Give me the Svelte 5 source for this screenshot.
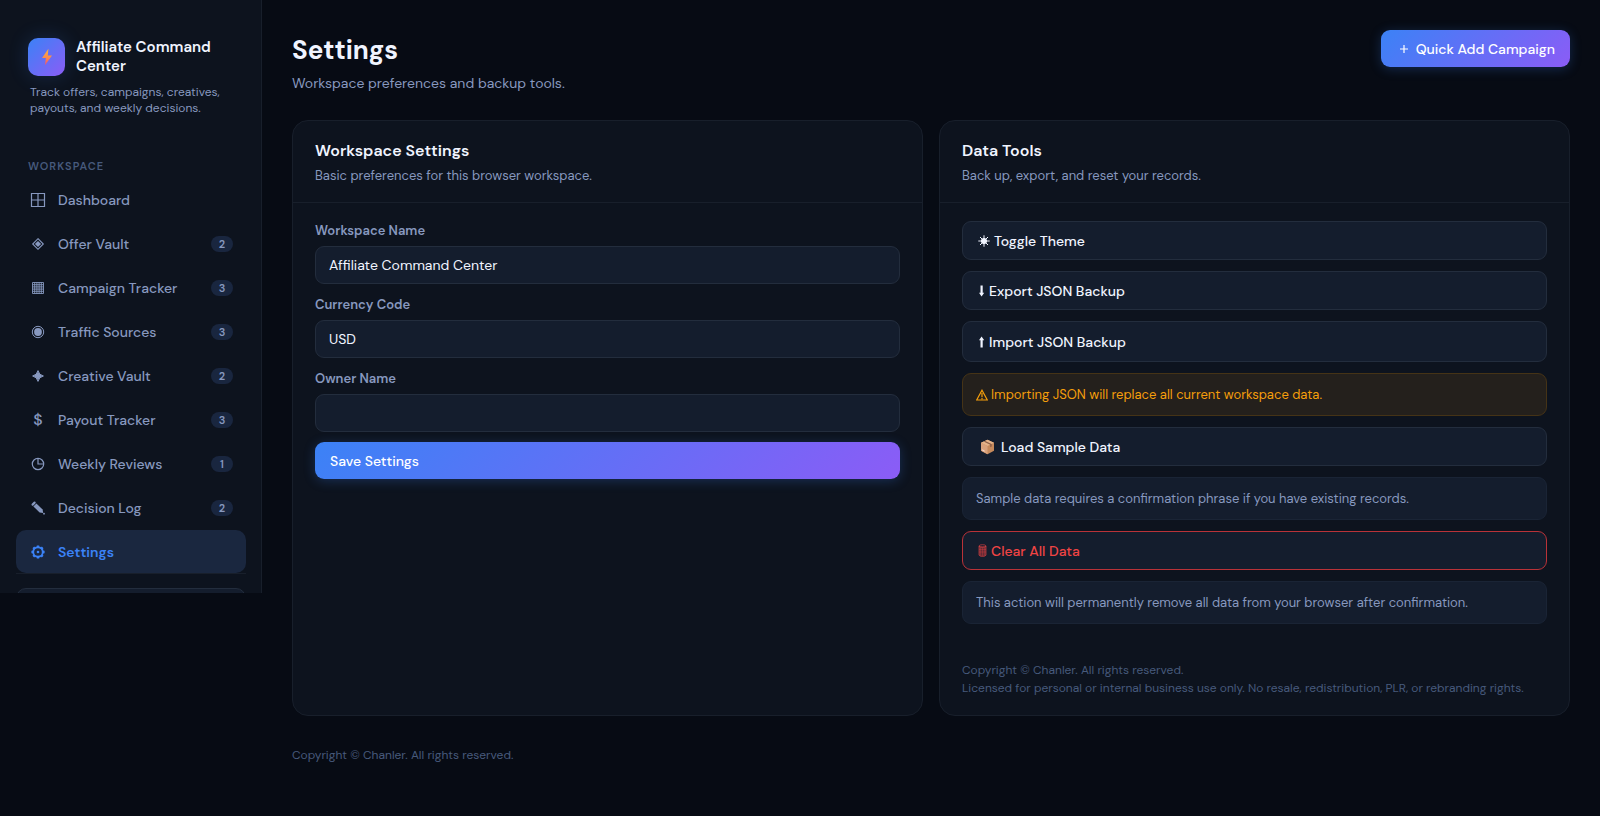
<script lang="ts">
	let workspaceName = $state('Affiliate Command Center');
	let currency = $state('USD');
	let owner = $state('');

	const navItems = [
		{ icon: 'grid', label: 'Dashboard' },
		{ icon: 'diamond', label: 'Offer Vault', count: 2 },
		{ icon: 'table', label: 'Campaign Tracker', count: 3 },
		{ icon: 'target', label: 'Traffic Sources', count: 3 },
		{ icon: 'star', label: 'Creative Vault', count: 2 },
		{ icon: 'dollar', label: 'Payout Tracker', count: 3 },
		{ icon: 'clock', label: 'Weekly Reviews', count: 1 },
		{ icon: 'pencil', label: 'Decision Log', count: 2 },
		{ icon: 'gear', label: 'Settings', active: true }
	];
</script>

{#snippet navIcon(name: string)}
	{#if name === 'dollar'}
		<span class="nav-icon dollar">$</span>
	{:else}
		<svg class="nav-icon" viewBox="0 0 16 16" fill="none" stroke="currentColor" aria-hidden="true">
			{#if name === 'grid'}
				<path d="M1.5 1.5h13v13h-13zM8 1.5v13M1.5 8h13" stroke-width="1.2" />
			{:else if name === 'diamond'}
				<path d="M8 2.7 13.3 8 8 13.3 2.7 8z" stroke-width="1.1" />
				<path d="M8 4.9 11.1 8 8 11.1 4.9 8z" fill="currentColor" stroke="none" />
			{:else if name === 'table'}
				<path d="M2.5 2.5h11v11h-11zM4.7 2.5v11M6.9 2.5v11M9.1 2.5v11M11.3 2.5v11M2.5 4.7h11M2.5 6.9h11M2.5 9.1h11M2.5 11.3h11" stroke-width=".9" />
			{:else if name === 'target'}
				<circle cx="8" cy="8" r="5.7" />
				<circle cx="8" cy="8" r="3.9" fill="currentColor" stroke="none" />
			{:else if name === 'star'}
				<path d="M8 2.6Q8.9 7.1 13.4 8 8.9 8.9 8 13.4 7.1 8.9 2.6 8 7.1 7.1 8 2.6z" fill="currentColor" />
			{:else if name === 'clock'}
				<circle cx="8" cy="8" r="5.7" stroke-width="1.2" />
				<path d="M8 2.3V8h5.7" stroke-width="1.2" />
			{:else if name === 'pencil'}
				<path d="M3.4 6.4 6.4 3.4 12.6 9.4 13.2 12.9 9.6 12.4z" fill="currentColor" stroke="none" />
				<path d="M2.6 4.6 4.6 2.6" stroke-width="2.2" stroke-linecap="round" />
				<circle cx="14" cy="13.7" r=".9" fill="currentColor" stroke="none" />
			{:else if name === 'gear'}
				<circle cx="8" cy="8" r="4.8" stroke-width="1.9" />
				<circle cx="8" cy="8" r="1.3" fill="currentColor" stroke="none" />
				<path d="M8 3.2V1.4M8 12.8v1.8M3.2 8H1.4M12.8 8h1.8M4.6 4.6 3.3 3.3M11.4 4.6l1.3-1.3M4.6 11.4l-1.3 1.3M11.4 11.4l1.3 1.3" stroke-width="2.4" />
			{/if}
		</svg>
	{/if}
{/snippet}

<div class="layout">
	<aside class="sidebar">
		<div class="brand">
			<div class="logo">
				<svg width="12" height="18" viewBox="0 0 12 18" aria-hidden="true">
					<defs>
						<linearGradient id="bolt" x1="0" y1="0" x2="0" y2="1">
							<stop offset="0" stop-color="#f9b43c" />
							<stop offset=".5" stop-color="#fb8f4c" />
							<stop offset="1" stop-color="#f4506b" />
						</linearGradient>
					</defs>
					<path d="M7.4.8 1 10h3.9L4 17.2 11 7.6H6.8z" fill="url(#bolt)" />
				</svg>
			</div>
			<div class="brand-name">Affiliate Command Center</div>
		</div>
		<p class="tagline">Track offers, campaigns, creatives, payouts, and weekly decisions.</p>

		<div class="nav-label">Workspace</div>
		<nav>
			{#each navItems as item}
				<a href="#{item.icon}" class="nav-item" class:active={item.active}>
					{@render navIcon(item.icon)}
					<span class="nav-text">{item.label}</span>
					{#if item.count}
						<span class="badge">{item.count}</span>
					{/if}
				</a>
			{/each}
		</nav>
		<div class="sidebar-footer">
			<button class="theme-btn" aria-label="Theme"></button>
		</div>
	</aside>

	<main>
		<header class="page-header">
			<div>
				<h1>Settings</h1>
				<p class="subtitle">Workspace preferences and backup tools.</p>
			</div>
			<button class="btn btn-primary quick-add">
				<svg width="10" height="10" viewBox="0 0 10 10" stroke="currentColor" stroke-width="1.2" aria-hidden="true">
					<path d="M5 1v8M1 5h8" />
				</svg>
				Quick Add Campaign
			</button>
		</header>

		<div class="cards">
			<section class="card">
				<div class="card-header">
					<h2>Workspace Settings</h2>
					<p>Basic preferences for this browser workspace.</p>
				</div>
				<form class="card-body form" onsubmit={(e) => e.preventDefault()}>
					<label for="workspace-name">Workspace Name</label>
					<input id="workspace-name" type="text" bind:value={workspaceName} />
					<label for="currency">Currency Code</label>
					<input id="currency" type="text" bind:value={currency} />
					<label for="owner">Owner Name</label>
					<input id="owner" type="text" bind:value={owner} />
					<button class="btn btn-primary" type="submit">Save Settings</button>
				</form>
			</section>

			<section class="card">
				<div class="card-header">
					<h2>Data Tools</h2>
					<p>Back up, export, and reset your records.</p>
				</div>
				<div class="card-body tools">
					<button class="btn">
						<svg width="12" height="12" viewBox="0 0 12 12" stroke="currentColor" stroke-width="1" aria-hidden="true">
							<circle cx="6" cy="6" r="2.6" fill="currentColor" />
							<path d="M6 .3v11.4M.3 6h11.4M2 2l8 8M10 2l-8 8" />
						</svg>
						Toggle Theme
					</button>
					<button class="btn">
						<svg width="7" height="12" viewBox="0 0 7 12" aria-hidden="true">
							<path d="M2.5.5h2.2v7.3h1.5L3.6 11.5 1 7.8h1.5z" fill="currentColor" />
						</svg>
						Export JSON Backup
					</button>
					<button class="btn import">
						<svg width="7" height="12" viewBox="0 0 7 12" aria-hidden="true">
							<path d="M2.5 11.5h2.2V4.2h1.5L3.6.5 1 4.2h1.5z" fill="currentColor" />
						</svg>
						Import JSON Backup
					</button>
					<div class="note warning">
						<svg width="12" height="12" viewBox="0 0 12 12" fill="none" stroke="currentColor" aria-hidden="true">
							<path d="M6 1.2 11.3 11H.7zM6 4v4M6 8.8v1.4" stroke-width="1.2" />
						</svg>
						Importing JSON will replace all current workspace data.
					</div>
					<button class="btn sample">
						<svg width="15" height="16" viewBox="0 0 15 16" aria-hidden="true">
							<path d="M7.5.8 14 3.8v8L7.5 15.2 1 11.8v-8z" fill="#c68a5c" />
							<path d="M7.5.8 14 3.8 7.5 7 1 3.8z" fill="#e5b48a" />
							<path d="M1 3.8 7.5 7v8.2L1 11.8z" fill="#d9a27c" />
							<path d="M3.6 2.6 10.2 5.7v2.6l1.5-.8V5L5.2 1.9z" fill="#8d5f48" />
							<path d="M2.2 10.2l2.4 1.2v1.4l-2.4-1.2z" fill="#f3d9d0" />
						</svg>
						Load Sample Data
					</button>
					<div class="note">Sample data requires a confirmation phrase if you have existing records.</div>
					<button class="btn danger">
						<svg width="9" height="13" viewBox="0 0 9 13" fill="none" stroke="currentColor" stroke-width=".6" aria-hidden="true">
							<path d="M1 2v9q0 1.4 3.5 1.4T8 11V2" fill="currentColor" fill-opacity=".35" />
							<ellipse cx="4.5" cy="2" rx="3.5" ry="1.3" />
							<path d="M2.6 3.5v8M4.5 3.5v8.5M6.4 3.5v8M1 5.5h7M1 8h7" opacity=".5" />
						</svg>
						Clear All Data
					</button>
					<div class="note">This action will permanently remove all data from your browser after confirmation.</div>
					<p class="legal">
						Copyright © Chanler. All rights reserved.<br />
						Licensed for personal or internal business use only. No resale, redistribution, PLR, or rebranding rights.
					</p>
				</div>
			</section>
		</div>

		<footer>Copyright © Chanler. All rights reserved.</footer>
	</main>
</div>

<style>
	:global(body) {
		background: #070b14;
		color: #f0f4ff;
		font-family: 'DM Sans', Inter, 'Open Sans', sans-serif;
		font-size: 14px;
	}

	.layout {
		--surface: #0d131e;
		--surface-2: #141d2d;
		--line: #181f2b;
		--line-2: #232d3d;
		--muted: #8798bf;
		--dim: #475a7c;
		--accent: #3b82f6;
		display: flex;
		align-items: flex-start;
	}

	.layout :is(h1, h2, p) {
		margin: 0;
	}

	.sidebar {
		box-sizing: border-box;
		flex: 0 0 262px;
		padding: 38px 15px 0 16px;
		background: var(--surface);
		border-right: 1px solid var(--line);
	}

	.brand {
		display: flex;
		align-items: center;
		gap: 11px;
		padding: 0 12px;
	}

	.logo {
		display: flex;
		align-items: center;
		justify-content: center;
		flex: none;
		width: 37px;
		height: 38px;
		border-radius: 10px;
		background: linear-gradient(135deg, var(--accent), #8b5cf6);
		box-shadow: 0 0 20px rgba(59, 130, 246, 0.2);
	}

	.brand-name {
		font-size: 15px;
		font-weight: 600;
		line-height: 19px;
	}

	.sidebar .tagline {
		margin: 8px 0 0;
		padding: 0 14px;
		font-size: 12px;
		line-height: 16px;
		color: var(--muted);
	}

	.nav-label {
		margin: 42px 12px 4px;
		font-size: 11px;
		font-weight: 600;
		line-height: 16px;
		letter-spacing: 1px;
		text-transform: uppercase;
		color: var(--dim);
	}

	nav {
		display: flex;
		flex-direction: column;
		gap: 1px;
	}

	.nav-item {
		display: flex;
		align-items: center;
		height: 43px;
		padding: 0 13px 0 14px;
		border-radius: 10px;
		color: var(--muted);
		font-weight: 500;
		text-decoration: none;
	}

	.nav-item.active {
		background: #1a273f;
		color: var(--accent);
		font-weight: 600;
	}

	.nav-icon {
		flex: none;
		width: 16px;
		height: 16px;
	}

	.dollar {
		font-size: 16px;
		line-height: 16px;
		text-align: center;
	}

	.nav-text {
		flex: 1;
		margin-left: 12px;
	}

	.badge {
		width: 22px;
		border-radius: 8px;
		background: #19263f;
		font-size: 11px;
		font-weight: 600;
		line-height: 16px;
		text-align: center;
	}

	.sidebar-footer {
		height: 19px;
		overflow: hidden;
		border-top: 1px solid var(--line);
	}

	.theme-btn {
		display: block;
		width: 100%;
		height: 38px;
		margin-top: 14px;
		border: 1px solid var(--line-2);
		border-radius: 10px;
		background: var(--surface-2);
	}

	main {
		flex: 1;
		min-width: 0;
		padding: 30px 30px 46px;
	}

	.page-header {
		display: flex;
		align-items: flex-start;
		justify-content: space-between;
		margin-bottom: 28px;
	}

	h1 {
		font-size: 26px;
		font-weight: 700;
		line-height: 40px;
	}

	.subtitle {
		padding-top: 4px;
		line-height: 18px;
		color: var(--muted);
	}

	.btn {
		display: flex;
		align-items: center;
		gap: 4px;
		height: 39px;
		padding: 0 15px;
		border: 1px solid var(--line-2);
		border-radius: 9px;
		background: var(--surface-2);
		color: #f0f4ff;
		font: inherit;
		font-weight: 500;
		text-align: left;
		cursor: pointer;
	}

	.btn-primary {
		height: 37px;
		border: 0;
		background: linear-gradient(135deg, var(--accent), #8b5cf6);
		box-shadow: 0 2px 12px rgba(59, 130, 246, 0.25);
		color: #fff;
	}

	.quick-add {
		gap: 7px;
		padding: 0 15px 0 18px;
	}

	.cards {
		display: grid;
		grid-template-columns: 1fr 1fr;
		gap: 16px;
	}

	.card {
		border: 1px solid var(--line);
		border-radius: 16px;
		background: var(--surface);
	}

	.card-header {
		padding: 18px 22px 16px;
		border-bottom: 1px solid var(--line);
	}

	h2 {
		font-size: 16px;
		font-weight: 600;
		line-height: 24px;
	}

	.card-header p {
		padding-top: 2px;
		font-size: 13px;
		line-height: 21px;
		color: var(--muted);
	}

	.card-body {
		display: flex;
		flex-direction: column;
		padding: 18px 22px;
	}

	.form {
		padding-top: 17px;
	}

	.form label {
		padding-bottom: 4px;
		font-size: 13px;
		font-weight: 600;
		line-height: 22px;
		color: var(--muted);
	}

	.form input {
		box-sizing: border-box;
		height: 38px;
		margin-bottom: 10px;
		padding: 0 13px;
		border: 1px solid var(--line-2);
		border-radius: 9px;
		background: var(--surface-2);
		color: #f0f4ff;
		font: inherit;
	}

	.tools {
		gap: 11px;
	}

	.import {
		height: 41px;
	}

	.sample {
		gap: 6px;
		padding: 0 17px;
	}

	.danger {
		border-color: #b93238;
		color: #ef4444;
	}

	.note {
		display: flex;
		align-items: center;
		gap: 3px;
		min-height: 41px;
		padding: 0 13px;
		border: 1px solid #1a2435;
		border-radius: 9px;
		background: var(--surface-2);
		font-size: 13px;
		color: var(--muted);
	}

	.warning {
		border-color: #453316;
		background: #24201c;
		color: #f59e0b;
	}

	.tools .legal {
		margin-top: 26px;
		font-size: 12px;
		line-height: 18px;
		color: var(--dim);
	}

	footer {
		margin-top: 30px;
		font-size: 12px;
		line-height: 18px;
		color: var(--dim);
	}
</style>
